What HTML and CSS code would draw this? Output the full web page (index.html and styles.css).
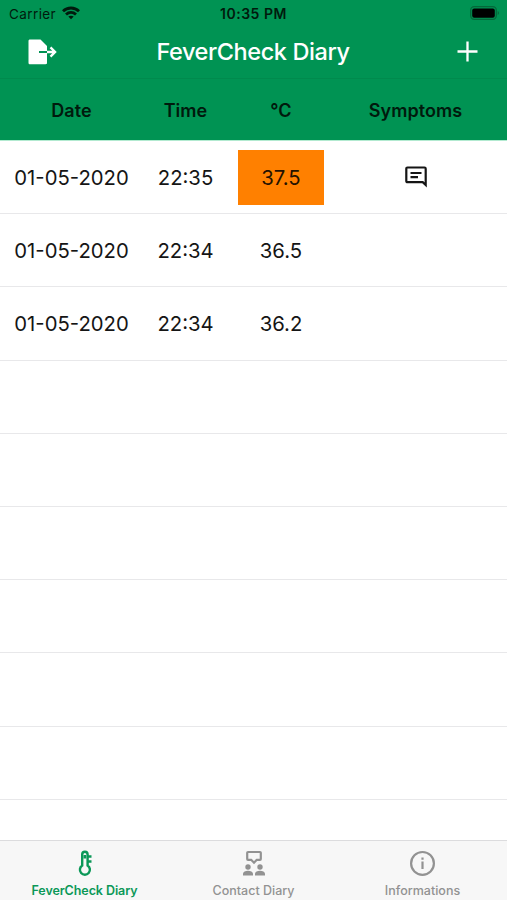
FILE: index.html
```html
<!DOCTYPE html>
<html lang="en">
<head>
<meta charset="utf-8">
<title>FeverCheck Diary</title>
<link rel="stylesheet" href="styles.css">
</head>
<body>
<div class="app">
  <header class="status">
    <div class="carrier"><span>Carrier</span>
      <svg width="18" height="14" viewBox="0 0 18 14" fill="none" stroke="#001a0d" stroke-width="2.8"><path d="M1 5.3C5.5.9 12.500.9 17 5.300M4 8.500c2.900-2.700 7.100-2.700 10 0"/><path d="M9 13.300 6.300 10.600c1.500-1.300 3.900-1.300 5.400 0z" fill="#001a0d" stroke="none"/></svg>
    </div>
    <span class="clock">10:35 PM</span>
    <svg class="battery" width="30" height="14" viewBox="0 0 30 14"><rect x=".7" y=".7" width="25.600" height="12.600" rx="3.500" fill="none" stroke="#04683a" stroke-width="1.300"/><rect x="2.200" y="2.400" width="22.600" height="9.300" rx="2" fill="#000"/><path d="M27.700 5v4c1.700-.6 1.700-3.400 0-4z" fill="#04683a"/></svg>
  </header>
  <nav class="navbar">
    <svg width="30" height="26" viewBox="0 0 30 26"><path d="M2.200.5h10.300L19 7v17c0 .8-.6 1.200-1.500 1.200H2.200C1 25.200.5 24.700.5 23.700V2C.5 1 1 .5 2.200.5z" fill="#fff"/><path d="M11 13h8" stroke="#009353" stroke-width="2"/><path d="M19 13h8M22.500 8.400l4.600 4.600-4.600 4.600" fill="none" stroke="#fff" stroke-width="2.300"/></svg>
    <h1>FeverCheck Diary</h1>
    <svg class="add" width="21" height="21" viewBox="0 0 21 21" stroke="#fff" stroke-width="2.300"><path d="M.5 10.500h20M10.500.5v20"/></svg>
  </nav>
  <div class="columns head"><span>Date</span><span>Time</span><span>°C</span><span>Symptoms</span></div>
  <main class="list">
    <div class="columns row"><span class="date">01-05-2020</span><span class="time">22:35</span><span class="temp fever">37.5</span><span class="note"><svg width="22" height="22" viewBox="0 0 22 22" fill="none" stroke="#151515" stroke-width="2.200"><path d="M2.500 1.500h17q1.200 0 1.200 1.200V19l-3-2.800H2.500q-1.200 0-1.200-1.200V2.700q0-1.200 1.200-1.200zM5.500 7h11M5.500 11.200h7.500"/></svg></span></div>
    <div class="columns row"><span class="date">01-05-2020</span><span class="time">22:34</span><span class="temp">36.5</span><span></span></div>
    <div class="columns row"><span class="date">01-05-2020</span><span class="time">22:34</span><span class="temp">36.2</span><span></span></div>
    <div class="row"></div><div class="row"></div><div class="row"></div><div class="row"></div><div class="row"></div><div class="row"></div>
  </main>
  <footer class="tabs">
    <div class="tab active">
      <svg width="28" height="28" viewBox="0 0 28 28" fill="none" stroke="currentColor" stroke-width="2.400"><path d="M11.200 16.500V5.500a2.700 2.700 0 0 1 5.400 0v11a5 5 0 1 1-5.400 0zM13.900 6v3.500M16.500 7.500h4M16.500 12.500h4"/></svg>
      <span class="t1">FeverCheck Diary</span>
    </div>
    <div class="tab">
      <svg width="28" height="28" viewBox="0 0 28 28" fill="currentColor"><path d="M8 3h12q.8 0 .8.800V10q0 .8-.8.800h-3.200L14 13.700l-2.800-2.900H8q-.8 0-.8-.8V3.800Q7.200 3 8 3z" fill="none" stroke="currentColor" stroke-width="2.200"/><circle cx="8" cy="18" r="2.700"/><circle cx="20" cy="18" r="2.700"/><path d="M3 26.500v-1.700c0-4 10-4 10 0v1.700zM15 26.500v-1.700c0-4 10-4 10 0v1.700z"/></svg>
      <span class="t2">Contact Diary</span>
    </div>
    <div class="tab">
      <svg width="28" height="28" viewBox="0 0 28 28" fill="none" stroke="currentColor" stroke-width="2.200"><circle cx="13.500" cy="14.400" r="11.400"/><path d="M13.500 12.500v7.500M13.500 8.500v2.300"/></svg>
      <span class="t3">Informations</span>
    </div>
  </footer>
</div>
</body>
</html>
```
FILE: styles.css
```css
* { box-sizing: border-box; }
body { margin: 0; background: #fff; color: #151515; font-family: Inter, "Liberation Sans", sans-serif; }
.app { height: 900px; display: flex; flex-direction: column; overflow: hidden; }
.status, .navbar, .head { background: #009353; flex: none; }
.status { height: 27px; display: grid; grid-template-columns: 1fr auto 1fr; align-items: center; padding: 1px 7px 0 9px; color: #001a0d; font-size: 13.5px; }
.carrier { display: flex; align-items: center; gap: 6px; letter-spacing: .4px; }
.carrier svg { margin-top: -2px; }
.clock { font-weight: 600; font-size: 14px; letter-spacing: .5px; margin: -1px 2px 0 0; }
.battery { justify-self: end; margin-top: -2px; }
.navbar { height: 52px; display: grid; grid-template-columns: 50px 1fr 50px; align-items: center; padding: 0 29px 2px 28px; border-bottom: 1px solid #008a4d; color: #fff; }
h1 { margin: 0; font-size: 23.5px; font-weight: 500; letter-spacing: -.4px; line-height: 30px; text-align: center; }
.add { justify-self: end; }
.columns { display: grid; grid-template-columns: 123px 105px 86px 183px; padding-left: 10px; align-items: center; text-align: center; }
.head { height: 61px; padding-top: 1px; font-size: 18px; font-weight: 600; letter-spacing: .05px; color: #001a0d; }
.list { flex: 1; min-height: 0; overflow: hidden; border-top: 1px solid #b2ead0; }
.row { height: 73.2px; border-bottom: 1px solid #e8e8ea; font-size: 20.3px; }
.date, .time { padding-top: 1px; }
.temp { height: 55px; line-height: 56px; }
.fever { background: #ff8000; color: #241200; }
.note svg { display: block; margin: 0 auto; }
.tabs { height: 60px; flex: none; display: grid; grid-template-columns: repeat(3, 1fr); background: #f7f7f7; border-top: 1px solid #dcdcde; }
.tab { display: flex; flex-direction: column; align-items: center; padding-top: 8px; color: #929292; font-size: 12.5px; font-weight: 500; white-space: nowrap; }
.tab span { line-height: 16px; margin-top: 6px; }
.active { color: #0b9858; }
.active span { font-weight: 600; letter-spacing: -.08px; }
```
